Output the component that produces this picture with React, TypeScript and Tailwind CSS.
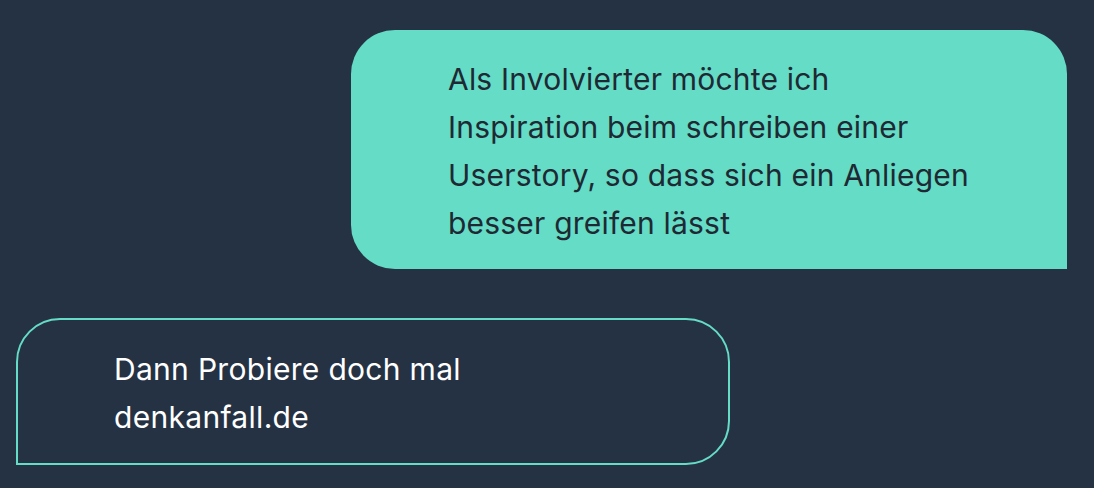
const messages = [
  {
    from: "me",
    lines: [
      "Als Involvierter möchte ich",
      "Inspiration beim schreiben einer",
      "Userstory, so dass sich ein Anliegen",
      "besser greifen lässt",
    ],
  },
  {
    from: "bot",
    lines: ["Dann Probiere doch mal", "denkanfall.de"],
  },
];

const App = () => {
  return (
    <div
      className="min-h-screen bg-[#253243] pt-[30px] pl-[16px] pr-[27px] flex flex-col gap-[49px]"
      style={{ fontFamily: "Inter, 'Noto Sans', sans-serif" }}
    >
      {messages.map((m, i) =>
        m.from === "me" ? (
          <div key={i} className="flex justify-end">
            <div className="w-[716px] bg-[#64dcc6] text-[#1f2933] text-[30px] leading-[48px] tracking-[0.2px] pl-[97px] pt-[25px] pb-[22px] rounded-tl-[44px] rounded-tr-[44px] rounded-bl-[44px]">
              {m.lines.map((l, j) => (
                <div key={j} className="whitespace-nowrap">{l}</div>
              ))}
            </div>
          </div>
        ) : (
          <div key={i} className="flex justify-start">
            <div className="w-[714px] border-[2px] border-[#64dcc6] text-white text-[30px] leading-[48px] tracking-[0.3px] pl-[96px] pt-[25px] pb-[22px] rounded-tl-[44px] rounded-tr-[44px] rounded-br-[44px]">
              {m.lines.map((l, j) => (
                <div key={j} className="whitespace-nowrap">{l}</div>
              ))}
            </div>
          </div>
        )
      )}
    </div>
  );
};

export default App;
